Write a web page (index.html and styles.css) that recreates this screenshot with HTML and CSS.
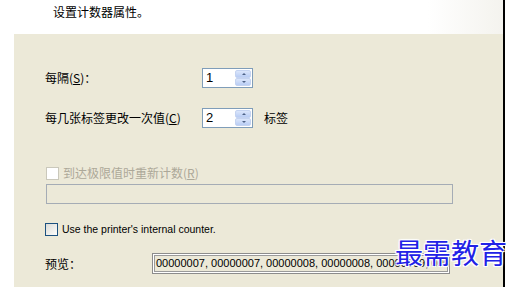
FILE: index.html
```html
<!DOCTYPE html>
<html>
<head>
<meta charset="utf-8">
<link rel="stylesheet" href="styles.css">
</head>
<body>
<div class="frame">
  <div class="header">设置计数器属性。</div>
  <div class="panel">
    <div class="row row1">
      <span class="label">每隔(<u>S</u>)：</span>
      <div class="spin"><span class="val">1</span><span class="btns"><span class="up"></span><span class="dn"></span></span></div>
    </div>
    <div class="row row2">
      <span class="label">每几张标签更改一次值(<u>C</u>)</span>
      <div class="spin"><span class="val">2</span><span class="btns"><span class="up"></span><span class="dn"></span></span></div>
      <span class="unit">标签</span>
    </div>
    <div class="check disabled"><span class="box"></span><span>到达极限值时重新计数(<u>R</u>)</span></div>
    <div class="textbox"></div>
    <div class="check enabled"><span class="box"></span><span class="latin">Use the printer's internal counter.</span></div>
    <div class="row preview-row">
      <span class="label">预览：</span>
      <div class="preview">00000007, 00000007, 00000008, 00000008, 00000009, 00000009</div>
    </div>
  </div>
</div>
<div class="watermark">最需教育</div>
</body>
</html>
```
FILE: styles.css
```css
html, body {
  margin: 0;
  padding: 0;
  background: #ffffff;
}
body {
  position: relative;
  width: 517px;
  height: 287px;
  overflow: hidden;
  font-family: "Noto Sans CJK SC", "Liberation Sans", sans-serif;
  font-size: 12px;
  color: #000;
}
.frame {
  width: 503px;
  height: 287px;
  border-right: 2px solid #000;
  display: flex;
  flex-direction: column;
}
.header {
  height: 34px;
  box-sizing: border-box;
  padding: 4px 0 0 53px;
  line-height: 16px;
  background: linear-gradient(to right, #fff 85%, #f4f3ee 100%);
}
.panel {
  flex: 1;
  margin-left: 14px;
  background: #ece9d8;
  padding-left: 31px;
  display: flex;
  flex-direction: column;
  align-items: flex-start;
}
.row {
  display: flex;
  align-items: center;
  height: 20px;
}
.row1 { margin-top: 34px; }
.row2 { margin-top: 20px; }
.label {
  width: 157px;
  line-height: 16px;
}
.spin {
  width: 51px;
  height: 20px;
  box-sizing: border-box;
  border: 1px solid #7f9db9;
  background: #fff;
  display: flex;
  justify-content: space-between;
  padding: 1px;
}
.val {
  font-family: "Liberation Sans", sans-serif;
  font-size: 13px;
  line-height: 16px;
  padding-left: 2px;
}
.btns {
  width: 16px;
  display: flex;
  flex-direction: column;
}
.btns span {
  flex: 1;
  position: relative;
  background: linear-gradient(#dbe6fb, #b9cdf4);
  border: 1px solid #c4d3f1;
  border-radius: 2px;
}
.btns span::after {
  content: "";
  position: absolute;
  left: 6px;
  top: 2px;
  border-left: 2px solid transparent;
  border-right: 2px solid transparent;
}
.btns .up::after { border-bottom: 2px solid #4d6185; }
.btns .dn::after { border-top: 2px solid #4d6185; }
.unit {
  margin-left: 11px;
  line-height: 16px;
}
.check {
  display: flex;
  align-items: center;
  gap: 4px;
  height: 16px;
  line-height: 16px;
}
.check.disabled {
  margin-top: 37px;
  color: #aca899;
}
.check .box {
  width: 13px;
  height: 13px;
  box-sizing: border-box;
}
.check.disabled .box {
  border: 1px solid #cac8bb;
  background: #fff;
  margin-left: 1px;
}
.check.enabled .box {
  border: 1px solid #1c5180;
  background: linear-gradient(135deg, #dcdcd7, #fdfdfb);
}
.check.enabled {
  margin-top: 17px;
}
.latin {
  font-family: "Liberation Sans", sans-serif;
  font-size: 10.5px;
}
.textbox {
  margin-top: 3px;
  margin-left: 1px;
  width: 407px;
  height: 20px;
  box-sizing: border-box;
  border: 1px solid #a5acb5;
  background: #ece9d8;
}
.preview-row {
  margin-top: 16px;
  height: 21px;
}
.preview-row .label {
  width: 107px;
}
.preview {
  width: 298px;
  height: 21px;
  box-sizing: border-box;
  border: 1px solid #8c8c8c;
  box-shadow: inset 0 0 0 1px #fff, inset 0 0 0 2px #9a9a9a;
  padding: 0 3px;
  font-family: "Liberation Sans", sans-serif;
  font-size: 11px;
  line-height: 19px;
  white-space: nowrap;
  overflow: hidden;
  background: #ece9d8;
}
.watermark {
  position: absolute;
  left: 395px;
  top: 235px;
  white-space: nowrap;
  font-family: "Noto Sans CJK SC", sans-serif;
  font-size: 28px;
  line-height: 34px;
  color: #2121e6;
  text-shadow: -1px -1px 0 #fff, 1px -1px 0 #fff, -1px 1px 0 #fff, 1px 1px 0 #fff, 0 0 3px #fff;
}
```
